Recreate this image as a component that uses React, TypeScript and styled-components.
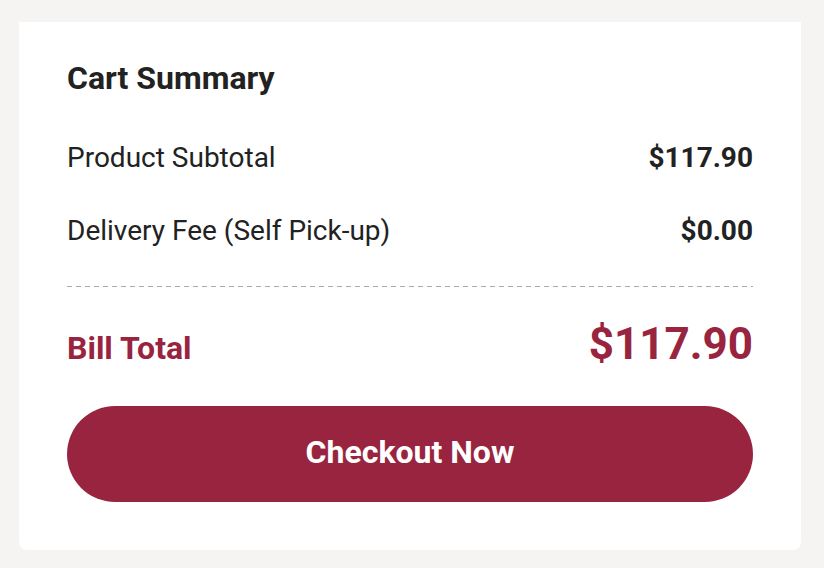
import React from "react";
import styled, { createGlobalStyle } from "styled-components";

const GlobalStyle = createGlobalStyle`
    html, body {
        margin: 0;
        padding: 0;
        background-color: #f5f4f2;
        font-family: Roboto, "Liberation Sans", sans-serif;
        color: #222222;
    }
`

const Page = styled.div`
    width: 824px;
    height: 568px;
    padding: 22px 23px 0 19px;
    box-sizing: border-box;
`
const Card = styled.section`
    background-color: #ffffff;
    border-radius: 0 0 8px 8px;
    padding: 37px 48px 48px;
    display: flex;
    flex-direction: column;
`
const Title = styled.h2`
    margin: 0 0 45px;
    font-size: 32px;
    line-height: 1.2;
    font-weight: 700;
`
const Rows = styled.div`
    display: flex;
    flex-direction: column;
    gap: 41px;
`
const Row = styled.div`
    display: flex;
    justify-content: space-between;
    align-items: baseline;
    font-size: 28px;
    line-height: 32px;
`
const Label = styled.span`
    font-weight: 400;
`
const Amount = styled.span`
    font-weight: 700;
`
const Divider = styled.div`
    height: 1px;
    margin: 39px 0 31px;
    background-image: repeating-linear-gradient(to right, #aaaaaa 0 5px, transparent 5px 9px);
`
const TotalRow = styled.div`
    display: flex;
    justify-content: space-between;
    align-items: baseline;
    color: #98243f;
    font-weight: 700;
`
const TotalLabel = styled.span`
    font-size: 32px;
    line-height: 1.2;
`
const TotalAmount = styled.span`
    font-size: 44px;
    line-height: 1.2;
`
const CheckoutButton = styled.button`
    margin-top: 35px;
    height: 96px;
    padding: 0 0 4px;
    border: none;
    border-radius: 48px;
    background-color: #98243f;
    color: #ffffff;
    font-family: Roboto, "Liberation Sans", sans-serif;
    font-size: 32px;
    font-weight: 700;
    cursor: pointer;
`

const App = () => {
    return (
        <>
            <GlobalStyle />
            <Page>
                <Card>
                    <Title>Cart Summary</Title>
                    <Rows>
                        <Row>
                            <Label>Product Subtotal</Label>
                            <Amount>$117.90</Amount>
                        </Row>
                        <Row>
                            <Label>Delivery Fee (Self Pick-up)</Label>
                            <Amount>$0.00</Amount>
                        </Row>
                    </Rows>
                    <Divider />
                    <TotalRow>
                        <TotalLabel>Bill Total</TotalLabel>
                        <TotalAmount>$117.90</TotalAmount>
                    </TotalRow>
                    <CheckoutButton>Checkout Now</CheckoutButton>
                </Card>
            </Page>
        </>
    )
}

export default App
